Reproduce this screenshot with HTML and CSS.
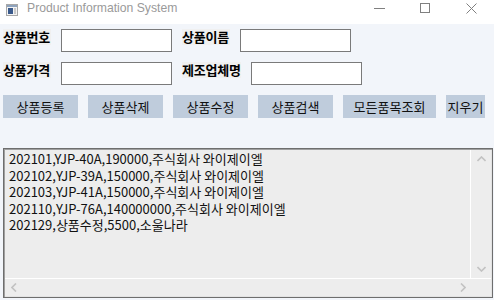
FILE: index.html
```html
<!DOCTYPE html>
<html>
<head>
    <title>Product Information System</title>
    <link rel="stylesheet" href="styles.css">
</head>
<body>
    <div class="titlebar">
        <svg class="app-icon" width="12" height="12" viewBox="0 0 12 12">
            <rect x="0.5" y="0.5" width="11" height="11" fill="#f4f4f4" stroke="#a8a8a8"/>
            <rect x="1" y="1" width="10" height="2" fill="#8fa3bd"/>
            <rect x="2" y="4" width="5" height="6" fill="#3a5a8c"/>
            <rect x="8" y="4" width="2" height="6" fill="#c9c9c9"/>
        </svg>
        <span class="title-text">Product Information System</span>
        <div class="caption-buttons">
            <span class="caption-btn">
                <svg width="11" height="11" viewBox="0 0 11 11"><line x1="0" y1="5.5" x2="11" y2="5.5" stroke="#808080"/></svg>
            </span>
            <span class="caption-btn">
                <svg width="11" height="11" viewBox="0 0 11 11"><rect x="0.5" y="0.5" width="9" height="9" fill="none" stroke="#808080"/></svg>
            </span>
            <span class="caption-btn">
                <svg width="11" height="11" viewBox="0 0 11 11"><path d="M0.5 0.5 L10.5 10.5 M10.5 0.5 L0.5 10.5" stroke="#808080"/></svg>
            </span>
        </div>
    </div>

    <section class="form-area">

        <div class="field-row">
            <label class="field-label" for="productNo">상품번호</label>
            <input class="field-input" type="text" id="productNo">
            <label class="field-label" for="productName">상품이름</label>
            <input class="field-input" type="text" id="productName">
        </div>

        <div class="field-row">
            <label class="field-label" for="productPrice">상품가격</label>
            <input class="field-input" type="text" id="productPrice">
            <label class="field-label" for="maker">제조업체명</label>
            <input class="field-input" type="text" id="maker">
        </div>

        <div class="button-row">
            <button class="action-btn">상품등록</button>
            <button class="action-btn">상품삭제</button>
            <button class="action-btn">상품수정</button>
            <button class="action-btn">상품검색</button>
            <button class="action-btn action-btn_wide">모든품목조회</button>
            <button class="action-btn action-btn_small">지우기</button>
        </div>

        <div class="output-box">
            <div class="output-text">202101,YJP-40A,190000,주식회사 와이제이엘
202102,YJP-39A,150000,주식회사 와이제이엘
202103,YJP-41A,150000,주식회사 와이제이엘
202110,YJP-76A,140000000,주식회사 와이제이엘
202129,상품수정,5500,소울나라</div>
            <div class="vscroll">
                <svg width="9" height="6" viewBox="0 0 9 6"><path d="M0.5 5 L4.5 1 L8.5 5" fill="none" stroke="#c2c2c2" stroke-width="1.6"/></svg>
                <svg width="9" height="6" viewBox="0 0 9 6"><path d="M0.5 1 L4.5 5 L8.5 1" fill="none" stroke="#c2c2c2" stroke-width="1.6"/></svg>
            </div>
            <div class="hscroll">
                <svg width="6" height="9" viewBox="0 0 6 9"><path d="M5 0.5 L1 4.5 L5 8.5" fill="none" stroke="#c2c2c2" stroke-width="1.6"/></svg>
                <svg width="6" height="9" viewBox="0 0 6 9"><path d="M1 0.5 L5 4.5 L1 8.5" fill="none" stroke="#c2c2c2" stroke-width="1.6"/></svg>
            </div>
            <div class="scroll-corner"></div>
        </div>

    </section>
</body>
</html>
```

FILE: styles.css
```css
body {
    margin: 0;
    background-color: #f2f5fa;
    font-family: "Noto Sans CJK KR", "Noto Sans", sans-serif;
    color: #000000;
}

.titlebar {
    display: flex;
    align-items: flex-start;
    height: 24px;
    padding-left: 6px;
    background-color: #ffffff;
}

.app-icon {
    margin-top: 4px;
}

.title-text {
    margin-left: 9px;
    font-family: "Liberation Sans", sans-serif;
    font-size: 12.2px;
    line-height: 17px;
    color: #9a9a9a;
}

.caption-buttons {
    display: flex;
    margin-left: auto;
}

.caption-btn {
    display: flex;
    justify-content: center;
    width: 46px;
    padding-top: 3px;
}

.form-area {
    display: flex;
    flex-direction: column;
    row-gap: 10px;
    padding: 5px 3px 0;
}

.field-row {
    display: flex;
    align-items: flex-start;
    column-gap: 10px;
}

.field-label {
    min-width: 48px;
    font-size: 13px;
    font-weight: 700;
    line-height: 16px;
    letter-spacing: -0.2px;
    background-color: #f0f0f0;
}

.field-input {
    box-sizing: border-box;
    width: 111px;
    height: 23px;
    margin: 0;
    border: 1px solid #7a7a7a;
    background-color: #ffffff;
}

.button-row {
    display: flex;
    column-gap: 10px;
}

.action-btn {
    width: 75px;
    height: 23px;
    padding: 0;
    border: none;
    background-color: #bfccdc;
    font-family: "Noto Sans CJK KR", sans-serif;
    font-size: 13px;
    color: #111111;
}

.action-btn_wide {
    width: 93px;
}

.action-btn_small {
    width: 39px;
}

.output-box {
    display: grid;
    grid-template-columns: 1fr 20px;
    grid-template-rows: 1fr 17px;
    box-sizing: border-box;
    width: 490px;
    height: 150px;
    margin-top: 20px;
    border: 1px solid #6e6e6e;
    box-shadow: inset 1px 1px 0 #a0a0a0, inset -1px -1px 0 #e3e3e3;
    padding: 1px;
    background-color: #ededed;
}

.output-text {
    padding: 1px 4px 0;
    border-right: 1px solid #ffffff;
    border-bottom: 1px solid #ffffff;
    font-size: 13px;
    line-height: 16.5px;
    white-space: pre;
    overflow: hidden;
    color: #111111;
}

.vscroll {
    display: flex;
    flex-direction: column;
    justify-content: space-between;
    align-items: center;
    padding: 6px 0 6px 1px;
    border-bottom: 1px solid #ffffff;
}

.hscroll {
    display: flex;
    justify-content: space-between;
    align-items: center;
    padding: 0 5px 0 6px;
}
```
